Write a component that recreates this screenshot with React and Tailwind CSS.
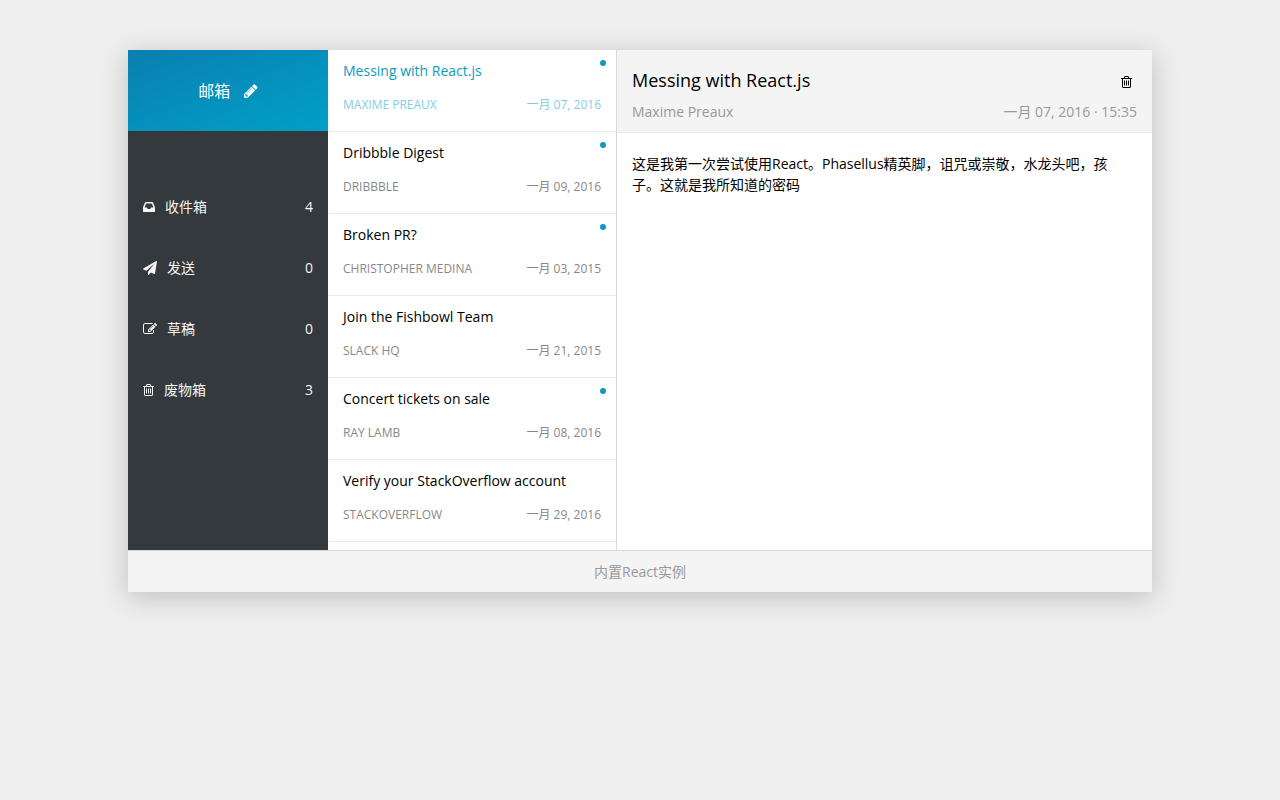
import { useState } from 'react'

const ICONS = {
  pencil: {
    box: '128 0 1536 1792',
    path: 'M491 1536l91-91-235-235-91 91v107h128v128h107zm523-928q0-22-22-22-10 0-17 7l-542 542q-7 7-7 17 0 22 22 22 10 0 17-7l542-542q7-7 7-17zm-54-192l416 416-832 832h-416v-416zm683 96q0 53-37 90l-166 166-416-416 166-165q36-38 90-38 53 0 91 38l235 234q37 39 37 91z',
  },
  inbox: {
    box: '128 0 1536 1792',
    path: 'M1151 960h316q-1-3-2.5-8t-2.5-8l-212-496h-708l-212 496q-1 2-2.5 8t-2.5 8h316l95 192h320zm513 30v482q0 26-19 45t-45 19h-1408q-26 0-45-19t-19-45v-482q0-62 25-123l238-552q10-25 36.5-42t52.5-17h832q26 0 52.5 17t36.5 42l238 552q25 61 25 123z',
  },
  plane: {
    box: '0 0 1792 1792',
    path: 'M1764 11q33 24 27 64l-256 1536q-5 29-32 45-14 8-31 8-11 0-24-5l-453-185-242 295q-18 23-49 23-13 0-22-4-19-7-30.5-23.5t-11.5-36.5v-349l864-1059-1069 925-395-162q-37-14-40-55-2-40 32-59l1664-960q15-9 32-9 20 0 36 11z',
  },
  edit: {
    box: '0 0 1792 1792',
    path: 'M888 1184l116-116-152-152-116 116v56h96v96h56zm440-720q-16-16-33 1l-350 350q-17 17-1 33t33-1l350-350q17-17 1-33zm80 594v190q0 119-84.5 203.5t-203.5 84.5h-832q-119 0-203.5-84.5t-84.5-203.5v-832q0-119 84.5-203.5t203.5-84.5h832q63 0 117 25 15 7 18 23 3 17-9 29l-49 49q-14 14-32 8-23-6-45-6h-832q-66 0-113 47t-47 113v832q0 66 47 113t113 47h832q66 0 113-47t47-113v-126q0-13 9-22l64-64q15-15 35-7t20 29zm-96-738l288 288-672 672h-288v-288zm444 132l-92 92-288-288 92-92q28-28 68-28t68 28l152 152q28 28 28 68t-28 68z',
  },
  trash: {
    box: '192 0 1408 1792',
    path: 'M704 736v576q0 14-9 23t-23 9h-64q-14 0-23-9t-9-23v-576q0-14 9-23t23-9h64q14 0 23 9t9 23zm256 0v576q0 14-9 23t-23 9h-64q-14 0-23-9t-9-23v-576q0-14 9-23t23-9h64q14 0 23 9t9 23zm256 0v576q0 14-9 23t-23 9h-64q-14 0-23-9t-9-23v-576q0-14 9-23t23-9h64q14 0 23 9t9 23zm128 724v-948h-896v948q0 22 7 40.5t14.5 27 10.5 8.5h832q3 0 10.5-8.5t14.5-27 7-40.5zm-672-1076h448l-48-117q-7-9-17-11h-317q-10 2-17 11zm928 32v64q0 14-9 23t-23 9h-96v948q0 83-47 143.5t-113 60.5h-832q-66 0-113-58.5t-47-141.5v-952h-96q-14 0-23-9t-9-23v-64q0-14 9-23t23-9h309l70-167q15-37 54-63t79-26h320q40 0 79 26t54 63l70 167h309q14 0 23 9t9 23z',
  },
}

const FOLDERS = [
  { label: '收件箱', icon: 'inbox', count: 4 },
  { label: '发送', icon: 'plane', count: 0 },
  { label: '草稿', icon: 'edit', count: 0 },
  { label: '废物箱', icon: 'trash', count: 3 },
]

const EMAILS = [
  {
    id: 1,
    from: 'Maxime Preaux',
    subject: 'Messing with React.js',
    date: '一月 07, 2016',
    time: '15:35',
    unread: true,
    body: '这是我第一次尝试使用React。Phasellus精英脚，诅咒或崇敬，水龙头吧，孩子。这就是我所知道的密码',
  },
  { id: 2, from: 'Dribbble', subject: 'Dribbble Digest', date: '一月 09, 2016', unread: true },
  { id: 3, from: 'Christopher Medina', subject: 'Broken PR?', date: '一月 03, 2015', unread: true },
  { id: 4, from: 'Slack HQ', subject: 'Join the Fishbowl Team', date: '一月 21, 2015' },
  { id: 5, from: 'Ray Lamb', subject: 'Concert tickets on sale', date: '一月 08, 2016', unread: true },
  { id: 6, from: 'StackOverflow', subject: 'Verify your StackOverflow account', date: '一月 29, 2016' },
]

function Icon({ name, className = 'h-3.5' }) {
  return (
    <svg viewBox={ICONS[name].box} fill="currentColor" aria-hidden="true" className={`w-auto ${className}`}>
      <path d={ICONS[name].path} />
    </svg>
  )
}

function Sidebar() {
  return (
    <aside className="flex w-[200px] shrink-0 flex-col bg-[#34393d] text-white">
      {/* Compose */}
      <div className="flex h-[81px] items-center justify-center bg-linear-160 from-[#0a7fb0] to-[#00a0c8]">
        <button type="button" className="flex cursor-pointer items-center gap-3.5 text-base">
          邮箱
          <Icon name="pencil" className="h-4" />
        </button>
      </div>

      {/* Folders */}
      <nav className="pt-[45px]">
        <ul>
          {FOLDERS.map((folder) => (
            <li key={folder.label}>
              <a href="#" className="flex h-[61px] items-center justify-between px-[15px] text-[#f5f5f5]">
                <span className="flex items-center gap-2.5">
                  <Icon name={folder.icon} />
                  {folder.label}
                </span>
                <span>{folder.count}</span>
              </a>
            </li>
          ))}
        </ul>
      </nav>
    </aside>
  )
}

function EmailItem({ email, selected, onSelect }) {
  return (
    <li className="border-b border-[#e9e9e9]">
      <button
        type="button"
        onClick={() => onSelect(email.id)}
        className={`relative block w-full cursor-pointer px-[15px] pt-2.5 pb-[17px] text-left ${
          selected ? 'text-[#0c9bbd]' : 'text-black'
        }`}
      >
        {email.unread && <span className="absolute top-2.5 right-2.5 size-1.5 rounded-full bg-[#0c9bbd]" />}
        <span className="block">{email.subject}</span>
        <span
          className={`mt-[15px] flex justify-between text-xs leading-[18px] ${
            selected ? 'text-[#86cdde]' : 'text-[#888888]'
          }`}
        >
          <span className="uppercase">{email.from}</span>
          <span>{email.date}</span>
        </span>
      </button>
    </li>
  )
}

function EmailDetails({ email }) {
  return (
    <article className="min-w-0 flex-1 bg-white">
      <header className="border-b border-[#e9e9e9] bg-[#f4f4f4] px-[15px] pt-4 pb-2.5">
        <div className="flex items-end justify-between">
          <h1 className="text-lg leading-7">{email.subject}</h1>
          <button type="button" aria-label="Delete" className="cursor-pointer p-[5px]">
            <Icon name="trash" />
          </button>
        </div>
        <div className="mt-[7px] flex justify-between text-[#999999]">
          <span>{email.from}</span>
          <span>
            {email.date} · {email.time}
          </span>
        </div>
      </header>
      <p className="py-5 pr-5 pl-[15px]">{email.body}</p>
    </article>
  )
}

function App() {
  const [selectedId, setSelectedId] = useState(1)
  const selected = EMAILS.find((email) => email.id === selectedId)

  return (
    <div className="min-h-screen bg-[#eeeeee] py-[50px] font-['Open_Sans','Noto_Sans_CJK_SC',sans-serif] text-sm leading-[21px] text-black">
      <div className="mx-auto w-4/5 shadow-[0_5px_25px_rgba(0,0,0,0.2)]">
        <main className="flex h-[500px] bg-white">
          <Sidebar />
          <ul className="w-[289px] shrink-0 overflow-hidden border-r border-[#d8d8d8]">
            {EMAILS.map((email) => (
              <EmailItem key={email.id} email={email} selected={email.id === selectedId} onSelect={setSelectedId} />
            ))}
          </ul>
          <EmailDetails email={selected} />
        </main>
        <footer className="border-t border-[#d8d8d8] bg-[#f4f4f4] py-2.5 text-center text-[#999999]">
          内置React实例
        </footer>
      </div>
    </div>
  )
}

export default App
